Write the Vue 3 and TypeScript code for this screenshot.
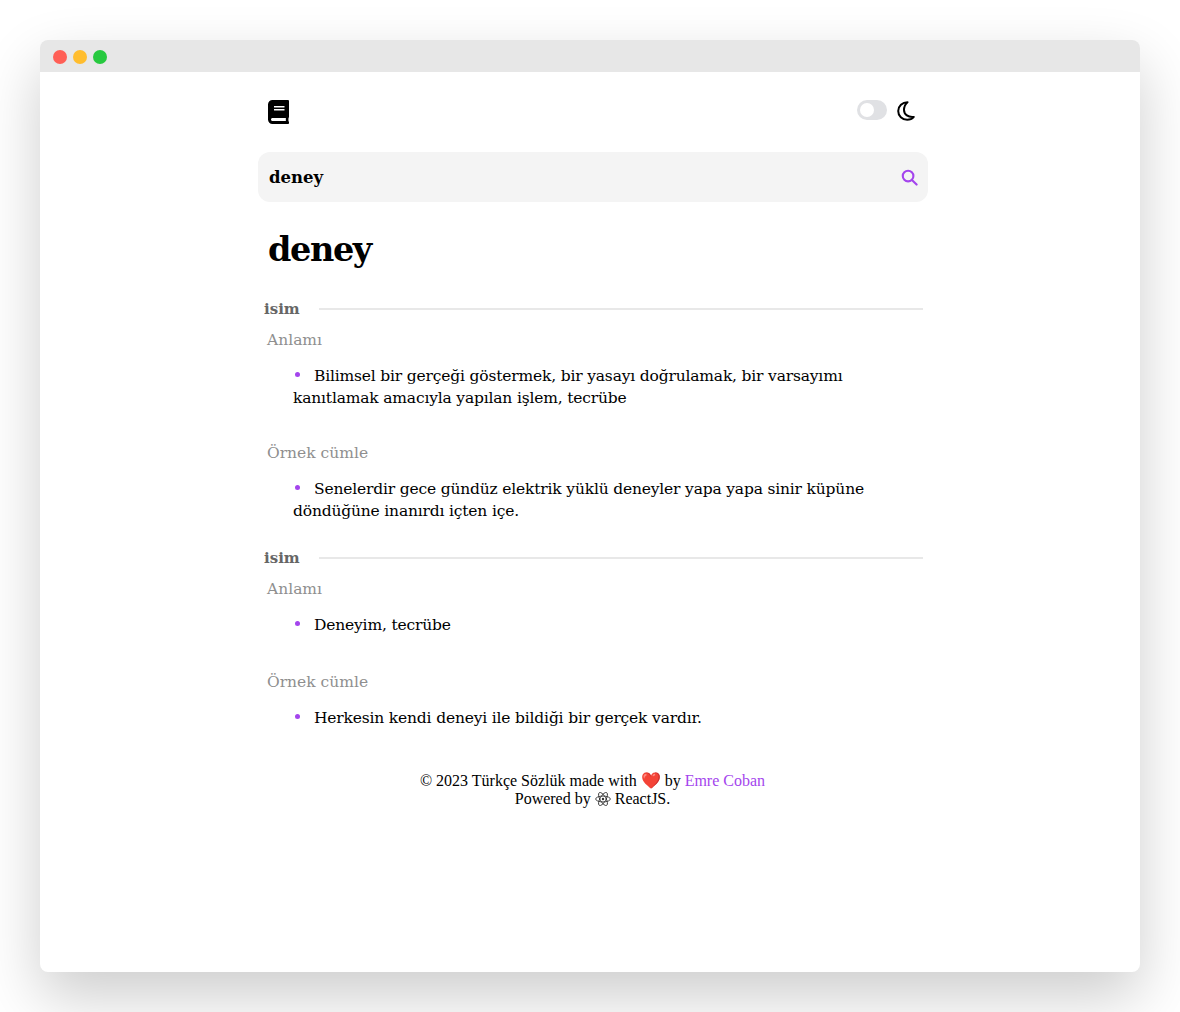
<template>
  <div class="page">
    <div class="window">
      <div class="titlebar">
        <span class="dot red"></span>
        <span class="dot yellow"></span>
        <span class="dot green"></span>
      </div>
      <div class="content">
        <header class="top">
          <svg class="book" viewBox="0 0 448 512" fill="#000">
            <path d="M448 360V24c0-13.3-10.7-24-24-24H96C43 0 0 43 0 96v320c0 53 43 96 96 96h328c13.3 0 24-10.7 24-24v-16c0-7.5-3.5-14.3-8.9-18.7-4.2-15.4-4.2-59.3 0-74.7 5.4-4.3 8.9-11.1 8.9-18.6zM128 134c0-3.3 2.7-6 6-6h212c3.3 0 6 2.7 6 6v20c0 3.3-2.7 6-6 6H134c-3.3 0-6-2.7-6-6v-20zm0 64c0-3.3 2.7-6 6-6h212c3.3 0 6 2.7 6 6v20c0 3.3-2.7 6-6 6H134c-3.3 0-6-2.7-6-6v-20zm253.4 250H96c-17.7 0-32-14.3-32-32 0-17.6 14.4-32 32-32h285.4c-1.9 17.1-1.9 46.9 0 64z" />
          </svg>
          <div class="theme">
            <span class="toggle"><span class="knob"></span></span>
            <svg class="moon" viewBox="0 0 18 20" fill="none" stroke="#000" stroke-width="2" stroke-linejoin="round">
              <path d="M10.5 1.2C5.4 1.2 1.2 5 1.2 10s4 8.8 9 8.8c2.6 0 5-1 6.6-2.9C11.4 16.6 7 13.5 7 9c0-3.2 1.4-6 3.5-7.8z" />
            </svg>
          </div>
        </header>

        <div class="search">
          <span class="query">{{ word }}</span>
          <svg class="glass" viewBox="0 0 24 24" fill="none" stroke="#a445ed" stroke-width="3" stroke-linecap="round">
            <circle cx="10" cy="10" r="7.5" />
            <path d="M15.8 15.8 22 22" />
          </svg>
        </div>

        <h1 class="title">{{ word }}</h1>

        <section v-for="(entry, i) in entries" :key="i" class="entry">
          <div class="kind">
            <span class="kind-name">isim</span>
            <span class="rule"></span>
          </div>
          <h2 class="label">Anlamı</h2>
          <ul class="list"><li>{{ entry.meaning }}</li></ul>
          <h2 class="label example">Örnek cümle</h2>
          <ul class="list"><li>{{ entry.sample }}</li></ul>
        </section>

        <footer class="foot">
          <div>© 2023 Türkçe Sözlük made with <span>❤️</span> by <a class="link">Emre Coban</a></div>
          <div>
            Powered by
            <svg class="atom" viewBox="0 0 24 24" fill="none" stroke="#333" stroke-width="1.3">
              <ellipse cx="12" cy="12" rx="11" ry="4.4" />
              <ellipse cx="12" cy="12" rx="11" ry="4.4" transform="rotate(60 12 12)" />
              <ellipse cx="12" cy="12" rx="11" ry="4.4" transform="rotate(120 12 12)" />
              <circle cx="12" cy="12" r="1.8" fill="#333" stroke="none" />
            </svg>
            ReactJS.
          </div>
        </footer>
      </div>
    </div>
  </div>
</template>

<script setup lang="ts">
const word = 'deney'

const entries = [
  {
    meaning: 'Bilimsel bir gerçeği göstermek, bir yasayı doğrulamak, bir varsayımı kanıtlamak amacıyla yapılan işlem, tecrübe',
    sample: 'Senelerdir gece gündüz elektrik yüklü deneyler yapa yapa sinir küpüne döndüğüne inanırdı içten içe.',
  },
  {
    meaning: 'Deneyim, tecrübe',
    sample: 'Herkesin kendi deneyi ile bildiği bir gerçek vardır.',
  },
]
</script>

<style>
html,
body {
  margin: 0;
  background: #fff;
}
</style>

<style scoped>
.page {
  height: 1012px;
  padding: 40px;
  box-sizing: border-box;
  overflow: hidden;
  font-family: "Liberation Serif", serif;
}

.window {
  height: 932px;
  background: #fff;
  border-radius: 8px;
  box-shadow: 0 25px 60px rgba(0, 0, 0, 0.2);
  overflow: hidden;
}

.titlebar {
  height: 32px;
  box-sizing: border-box;
  padding: 2px 0 0 13px;
  background: #e7e7e7;
  display: flex;
  align-items: center;
  gap: 6px;
}

.dot {
  width: 14px;
  height: 14px;
  border-radius: 50%;
}
.red { background: #ff5f56; }
.yellow { background: #ffbd2e; }
.green { background: #27c93f; }

.content {
  width: 670px;
  margin-left: 218px;
  color: #000;
}

.top {
  display: flex;
  justify-content: space-between;
  align-items: flex-start;
  height: 80px;
  box-sizing: border-box;
  padding: 28px 13px 0 10px;
}

.book {
  width: 21px;
  height: 24px;
}

.theme {
  display: flex;
  align-items: flex-start;
  gap: 10px;
}

.toggle {
  width: 30px;
  height: 20px;
  border-radius: 10px;
  background: #e0e1e4;
  display: flex;
  align-items: center;
  padding-left: 3px;
  box-sizing: border-box;
}

.knob {
  width: 14px;
  height: 14px;
  border-radius: 50%;
  background: #fff;
}

.moon {
  width: 18px;
  height: 20px;
  margin-top: 1px;
}

.search {
  height: 50px;
  background: #f4f4f4;
  border-radius: 12px;
  display: flex;
  align-items: center;
  justify-content: space-between;
  padding: 0 10px 0 11px;
}

.query {
  font-family: "DejaVu Serif", serif;
  font-weight: 700;
  font-size: 16.5px;
}

.glass {
  width: 17px;
  height: 17px;
}

.title {
  font-family: "DejaVu Serif", serif;
  font-weight: 700;
  font-size: 33.5px;
  letter-spacing: -1.4px;
  line-height: 50px;
  margin: 23px 0 23px 10px;
}

.entry {
  margin-bottom: 25px;
}

.kind {
  display: flex;
  align-items: center;
  height: 22px;
  padding: 0 5px 0 6px;
}

.kind-name {
  font-family: "DejaVu Serif", serif;
  font-weight: 700;
  font-size: 15px;
  color: #666;
  width: 55px;
}

.rule {
  flex: 1;
  height: 2px;
  background: #e8e8e8;
}

.label {
  font-family: "DejaVu Serif", serif;
  font-weight: 300;
  font-size: 15.5px;
  line-height: 22px;
  color: #8f8f8f;
  margin: 9px 0 0 9px;
}

.label.example {
  margin-top: 33px;
}

.list {
  margin: 14px 40px 0 35px;
  padding: 0;
  min-height: 24px;
  list-style: none;
}

.list li {
  font-family: "DejaVu Serif", serif;
  font-size: 15.5px;
  line-height: 22px;
  letter-spacing: -0.18px;
}

.list li::before {
  content: "";
  display: inline-block;
  width: 5px;
  height: 5px;
  border-radius: 50%;
  background: #a445ed;
  margin: 0 14px 4px 2px;
}

.foot {
  text-align: center;
  font-size: 16px;
  line-height: 18px;
  margin-top: 41px;
  padding-right: 1px;
}

.atom {
  width: 16px;
  height: 16px;
  vertical-align: -3px;
}

.link {
  color: #a445ed;
}
</style>
